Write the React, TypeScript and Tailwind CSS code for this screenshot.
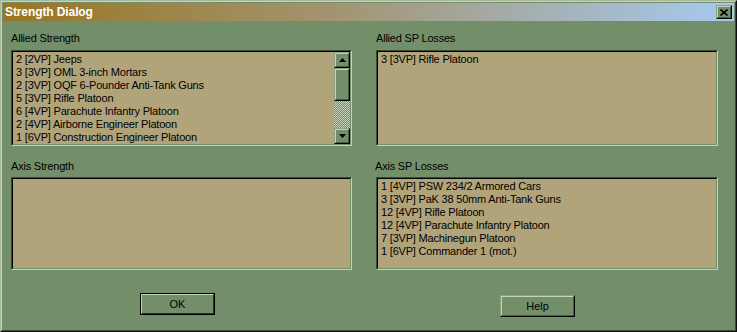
import React from "react";

const font = { fontFamily: '"Liberation Sans", Arial, sans-serif' };

function Sunken({ className = "", children }: { className?: string; children?: React.ReactNode }) {
  return (
    <div className={`border border-t-[#3b4a36] border-l-[#3b4a36] border-b-[#c6d2ba] border-r-[#c6d2ba] ${className}`}>
      <div className="h-full w-full border border-t-black border-l-black border-b-[#738f6a] border-r-[#738f6a] bg-[#b2a47a] overflow-hidden">
        {children}
      </div>
    </div>
  );
}

function Raised({ className = "", children }: { className?: string; children?: React.ReactNode }) {
  return (
    <div className={`border border-t-[#8aa080] border-l-[#8aa080] border-b-black border-r-black ${className}`}>
      <div className="h-full w-full border border-t-[#c6d2ba] border-l-[#c6d2ba] border-b-[#4a5a44] border-r-[#4a5a44] bg-[#738f6a] flex items-center justify-center">
        {children}
      </div>
    </div>
  );
}

function Rows({ items }: { items: string[] }) {
  return (
    <div className="pl-[3px] pt-[1px] text-[11px] leading-[13px] tracking-[-0.2px] text-black whitespace-nowrap">
      {items.map((t, i) => (
        <div key={i} className="h-[13px]">{t}</div>
      ))}
    </div>
  );
}

const Arrow = ({ up }: { up?: boolean }) => (
  <svg width="7" height="4" viewBox="0 0 7 4">
    {up ? <polygon points="3.5,0 7,4 0,4" fill="black" /> : <polygon points="0,0 7,0 3.5,4" fill="black" />}
  </svg>
);

export default function App() {
  const allied = [
    "2 [2VP] Jeeps",
    "3 [3VP] OML 3-inch Mortars",
    "2 [3VP] OQF 6-Pounder Anti-Tank Guns",
    "5 [3VP] Rifle Platoon",
    "6 [4VP] Parachute Infantry Platoon",
    "2 [4VP] Airborne Engineer Platoon",
    "1 [6VP] Construction Engineer Platoon",
  ];
  const axisLoss = [
    "1 [4VP] PSW 234/2 Armored Cars",
    "3 [3VP] PaK 38 50mm Anti-Tank Guns",
    "12 [4VP] Rifle Platoon",
    "12 [4VP] Parachute Infantry Platoon",
    "7 [3VP] Machinegun Platoon",
    "1 [6VP] Commander 1 (mot.)",
  ];
  return (
    <div style={font} className="w-[737px] h-[332px] overflow-hidden bg-[#738f6a]">
      <div className="w-full h-full border border-t-[#a9b89c] border-l-[#a9b89c] border-b-[#101010] border-r-[#101010]">
        <div className="w-full h-full border border-t-[#c6d2ba] border-l-[#c6d2ba] border-b-[#3d4a38] border-r-[#3d4a38] p-px flex flex-col">
          {/* Title bar */}
          <div className="h-[18px] flex items-center justify-between bg-[linear-gradient(90deg,#987622_0%,#a39470_45%,#a6caf0_100%)] pl-[2px] pr-[2px]">
            <span className="text-white font-bold text-[12px] tracking-[-0.1px] leading-[18px]">Strength Dialog</span>
            <Raised className="w-[16px] h-[14px]">
              <svg width="8" height="7" viewBox="0 0 8 7">
                <path d="M0.5 0.5 L7.5 6.5 M7.5 0.5 L0.5 6.5" stroke="black" strokeWidth="1.6" />
              </svg>
            </Raised>
          </div>
          {/* Content */}
          <div className="pl-[8px] pt-[11px] text-[11px] leading-[13px] tracking-[-0.2px] text-black">
            <div className="grid grid-cols-[341px_342px] gap-x-[24px]">
              <div>
                <div className="h-[13px] mb-[5px]">Allied Strength</div>
                <Sunken className="h-[96px]">
                  <div className="flex h-full">
                    <div className="flex-1"><Rows items={allied} /></div>
                    <div className="w-[16px] h-full flex flex-col">
                      <Raised className="h-[16px]"><Arrow up /></Raised>
                      <Raised className="h-[33px]" />
                      <div className="flex-1 bg-[repeating-conic-gradient(#c6d2ba_0_25%,#738f6a_0_50%)] bg-[length:2px_2px]" />
                      <Raised className="h-[16px]"><Arrow /></Raised>
                    </div>
                  </div>
                </Sunken>
              </div>
              <div>
                <div className="h-[13px] mb-[5px]">Allied SP Losses</div>
                <Sunken className="h-[96px]">
                  <Rows items={["3 [3VP] Rifle Platoon"]} />
                </Sunken>
              </div>
              <div className="mt-[14px]">
                <div className="h-[13px] mb-[4px]">Axis Strength</div>
                <Sunken className="h-[93px]" />
              </div>
              <div className="mt-[14px]">
                <div className="h-[13px] mb-[4px] -ml-px">Axis SP Losses</div>
                <Sunken className="h-[93px]">
                  <Rows items={axisLoss} />
                </Sunken>
              </div>
              <div className="mt-[23px] pl-[129px]">
                <div className="w-[75px] h-[22px] border border-black">
                  <div className="w-full h-full border border-t-[#c6d2ba] border-l-[#c6d2ba] border-b-[#2a3526] border-r-[#2a3526] flex items-center justify-center">
                    <span className="text-[11px] tracking-[0px]">OK</span>
                  </div>
                </div>
              </div>
              <div className="mt-[25px] pl-[124px]">
                <Raised className="w-[75px] h-[22px]">
                  <span className="text-[11px] tracking-[0px]">Help</span>
                </Raised>
              </div>
            </div>
          </div>
        </div>
      </div>
    </div>
  );
}
